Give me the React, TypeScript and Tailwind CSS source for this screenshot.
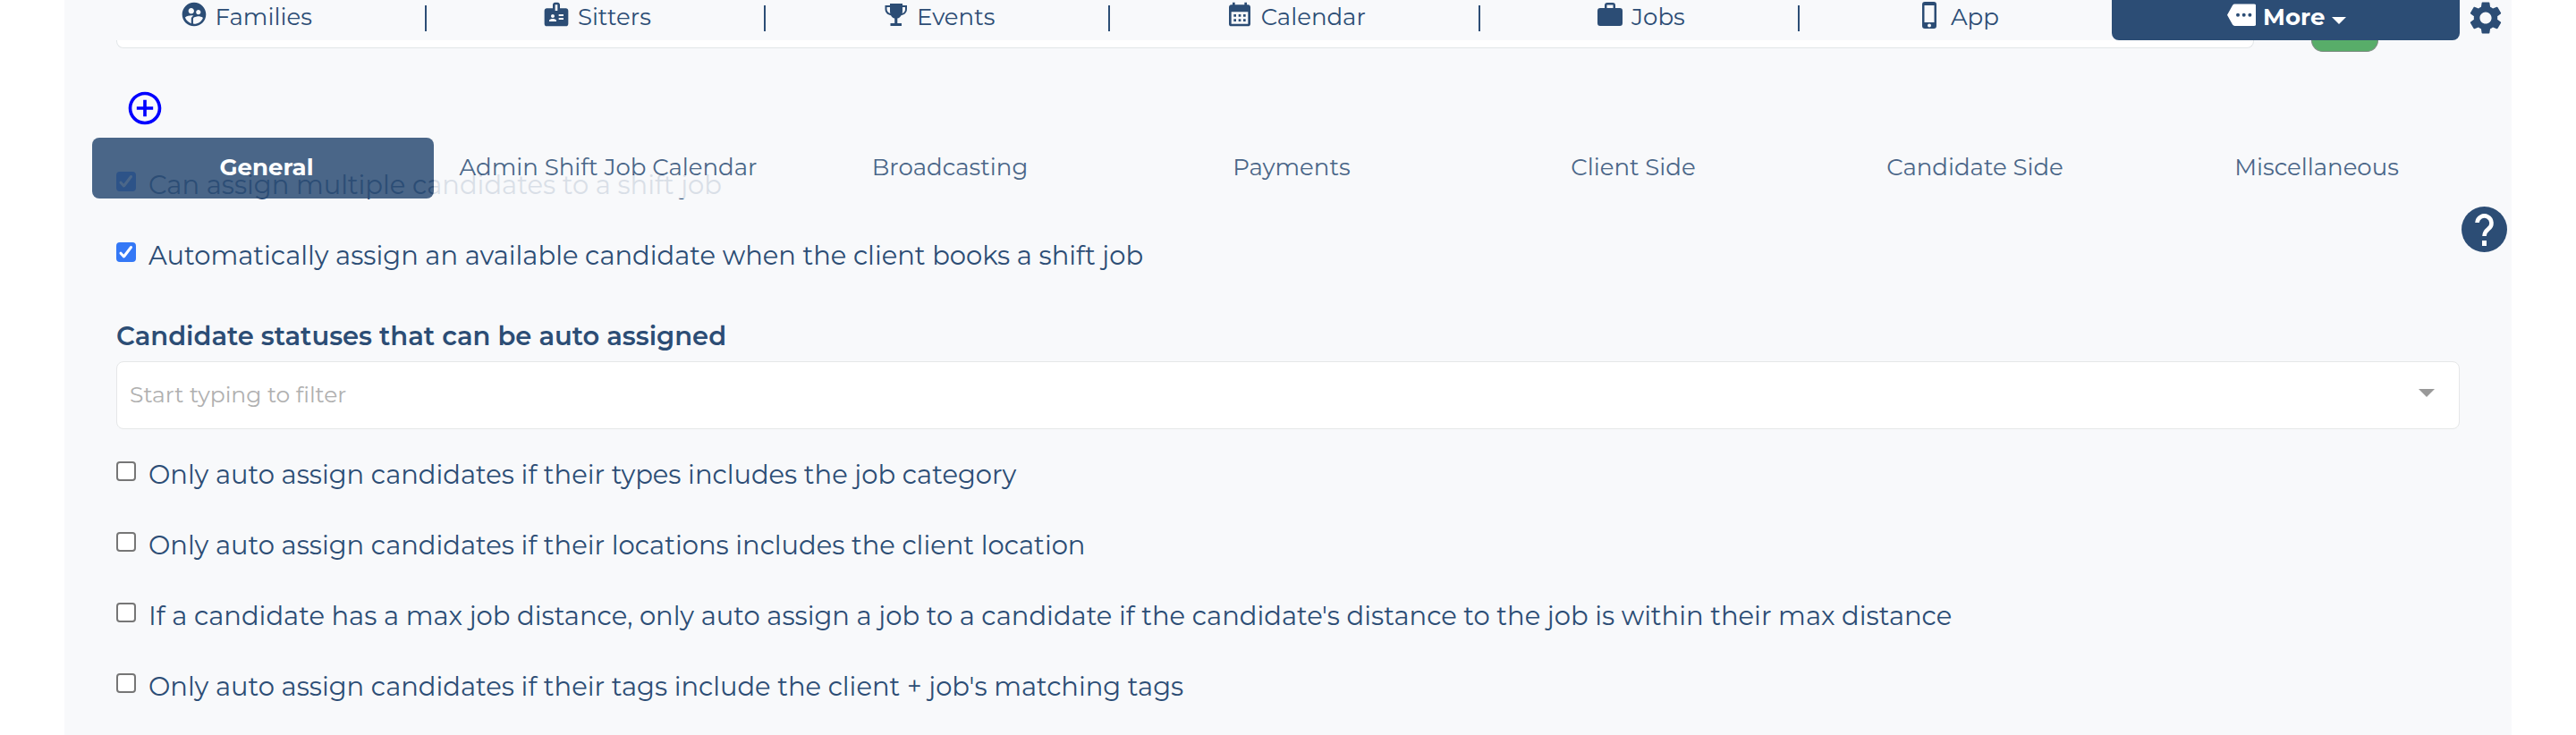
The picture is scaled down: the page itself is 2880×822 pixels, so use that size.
import { useState, type ReactNode } from "react";
import {
  MdSupervisedUserCircle,
  MdBadge,
  MdCalendarMonth,
  MdSettings,
  MdAddCircleOutline,
} from "react-icons/md";

const NAV: { label: string; icon: ReactNode }[] = [
  { label: "Families", icon: <MdSupervisedUserCircle className="size-8" /> },
  { label: "Sitters", icon: <MdBadge className="size-8" /> },
  {
    label: "Events",
    icon: (
      <svg viewBox="0 0 32 32" className="size-8" fill="currentColor" aria-hidden="true">
        <path d="M10 4h14v2h5v4c0 4-2.500 6.500-6.500 7.200C21.500 19 20 20.200 18.300 20.600V26H23v3H10.500v-3h4.700v-5.400c-1.700-.400-3.200-1.600-4.200-3.400C7 16.500 4.500 14 4.500 10V6H10Zm0 4H6.500v2c0 2.500 1.300 4.100 3.800 5C10 14 10 13 10 12Zm14 0v4c0 1 0 2-.300 3 2.500-.900 3.300-2.500 3.300-5V8Z" fillRule="evenodd" />
      </svg>
    ),
  },
  { label: "Calendar", icon: <MdCalendarMonth className="size-8" /> },
  {
    label: "Jobs",
    icon: (
      <svg viewBox="0 0 32 32" className="size-8" fill="currentColor" aria-hidden="true">
        <path d="M5 9h5V6a3 3 0 0 1 3-3h6a3 3 0 0 1 3 3v3h5a3 3 0 0 1 3 3v14a3 3 0 0 1-3 3H5a3 3 0 0 1-3-3V12a3 3 0 0 1 3-3Zm7.500 0h7V5.500h-7Z" fillRule="evenodd" />
      </svg>
    ),
  },
  {
    label: "App",
    icon: (
      <svg viewBox="0 0 32 32" className="size-8" fill="currentColor" aria-hidden="true">
        <path d="M11 2h10a3 3 0 0 1 3 3v24a3 3 0 0 1-3 3H11a3 3 0 0 1-3-3V5a3 3 0 0 1 3-3Zm-.500 4v19h11V6ZM16 26.500a2 2 0 1 0 0 4 2 2 0 0 0 0-4Z" fillRule="evenodd" />
      </svg>
    ),
  },
];

const TABS = [
  "General",
  "Admin Shift Job Calendar",
  "Broadcasting",
  "Payments",
  "Client Side",
  "Candidate Side",
  "Miscellaneous",
];

function CheckRow({ label, initial = false }: { label: string; initial?: boolean }) {
  const [on, setOn] = useState(initial);
  return (
    <label className="flex h-[79px] items-start gap-3.5 text-[29px] leading-[38px]">
      <span className="mt-1 grid size-[22px] shrink-0">
        <input
          type="checkbox"
          checked={on}
          onChange={() => setOn(!on)}
          className="col-start-1 row-start-1 size-[22px] appearance-none rounded border-2 border-[#767676] bg-white checked:border-[#3478f6] checked:bg-[#3478f6]"
        />
        {on && (
          <svg viewBox="0 0 22 22" className="pointer-events-none col-start-1 row-start-1 size-[22px]" fill="none" stroke="#fff" strokeWidth="3" strokeLinecap="round" strokeLinejoin="round" aria-hidden="true">
            <path d="M5 12.200 8.500 16 16.500 5.500" />
          </svg>
        )}
      </span>
      <span>{label}</span>
    </label>
  );
}

export default function App() {
  const [tab, setTab] = useState("General");
  return (
    <div className="bg-white px-[72px] font-['Montserrat','Inter',sans-serif] text-[#2c4d75]">
      <div className="min-h-screen bg-[#f8f9fb]">
        <header className="relative z-10 flex h-[45px] bg-[#f8f9fb]">
          <nav className="flex flex-auto">
            {NAV.map((item, i) => (
              <a key={item.label} href="#" className="flex flex-auto items-start text-[26px] leading-[38px]">
                <span className="flex flex-auto items-start justify-center gap-2 pl-0.5">
                  {item.icon}
                  {item.label}
                </span>
                {i < NAV.length - 1 && <span className="mt-1.5 h-[29px] w-0.5 bg-[#2c4d75]" />}
              </a>
            ))}
            <button type="button" className="flex h-[45px] flex-auto items-start justify-center gap-2 rounded-b-lg bg-[#2c4d75] pl-0.5 text-[26px] leading-[38px] font-bold text-white">
              <svg viewBox="0 0 32 32" className="size-8" fill="currentColor" aria-hidden="true">
                <path d="M8.500 4.500H30a2.200 2.200 0 0 1 2.200 2.200v20A2.200 2.200 0 0 1 30 29H8.500a3 3 0 0 1-2.500-1.400L0 16.700 6 5.900A3 3 0 0 1 8.500 4.500ZM12 14.700a2 2 0 1 0 0 4 2 2 0 0 0 0-4Zm6.700 0a2 2 0 1 0 0 4 2 2 0 0 0 0-4Zm6.700 0a2 2 0 1 0 0 4 2 2 0 0 0 0-4Z" fillRule="evenodd" />
              </svg>
              More
              <svg viewBox="0 0 16 8" className="mt-[19px] h-2 w-4" fill="currentColor" aria-hidden="true">
                <path d="M0 0h16L8 8Z" />
              </svg>
            </button>
          </nav>
          <button type="button" aria-label="Settings" className="flex w-[58px] items-start pl-[7px]">
            <MdSettings className="-mt-0.5 size-11" />
          </button>
        </header>

        <main className="flex flex-col px-[58px]">
          <div className="flex items-start">
            <div className="h-[9px] w-[2390px] shrink rounded-b-lg border border-t-0 border-[#e2e6e8] bg-white" />
            <div className="ml-16 h-[13px] w-[75px] shrink-0 rounded-b-[20px] border border-t-0 border-[#7c8c80] bg-[#58ad69]" />
          </div>
          <button type="button" aria-label="Add" className="mt-[41px] ml-2.5 self-start text-[#0000ff]">
            <MdAddCircleOutline className="size-11" />
          </button>

          <div role="tablist" className="relative z-10 -mx-[27px] mt-[11px] grid h-[68px] grid-cols-7 bg-[#f8f9fb] opacity-85">
            {TABS.map((name) => (
              <button
                key={name}
                type="button"
                role="tab"
                aria-selected={name === tab}
                onClick={() => setTab(name)}
                className="rounded-lg pb-0.5 pl-2 text-[26px] aria-selected:bg-[#2c4d75] aria-selected:font-bold aria-selected:text-white"
              >
                {name}
              </button>
            ))}
          </div>

          <section className="-mt-[34px]">
            <CheckRow label="Can assign multiple candidates to a shift job" initial />
            <CheckRow label="Automatically assign an available candidate when the client books a shift job" initial />
          </section>

          <label htmlFor="statuses" className="mt-2.5 text-[29px] leading-10 font-semibold">
            Candidate statuses that can be auto assigned
          </label>
          <div className="mt-2 flex h-[76px] items-center rounded-lg border border-[#e5e7e8] bg-white pr-[27px] pb-0.5 pl-3.5">
            <input
              id="statuses"
              placeholder="Start typing to filter"
              className="h-full flex-1 bg-transparent text-[25px] outline-none placeholder:text-[#b0b0b0]"
            />
            <svg viewBox="0 0 18 9" className="mb-1 h-[9px] w-[18px]" fill="#999" aria-hidden="true">
              <path d="M0 0h18L9 9Z" />
            </svg>
          </div>

          <section className="mt-8">
            <CheckRow label="Only auto assign candidates if their types includes the job category" />
            <CheckRow label="Only auto assign candidates if their locations includes the client location" />
            <CheckRow label="If a candidate has a max job distance, only auto assign a job to a candidate if the candidate's distance to the job is within their max distance" />
            <CheckRow label="Only auto assign candidates if their tags include the client + job's matching tags" />
          </section>
        </main>

        <button type="button" aria-label="Help" className="fixed top-[231px] right-[77px] z-20">
          <svg viewBox="0 0 51 51" className="size-[51px]" aria-hidden="true">
            <circle cx="25.500" cy="25.500" r="25.500" fill="#2c4d75" />
            <path d="M17.500 18a8 8 0 1 1 12.500 7c-3 2.500-4.500 4-4.500 8" fill="none" stroke="#fff" strokeWidth="4.600" />
            <path d="M23 38h5v6h-5Z" fill="#fff" />
          </svg>
        </button>
      </div>
    </div>
  );
}
